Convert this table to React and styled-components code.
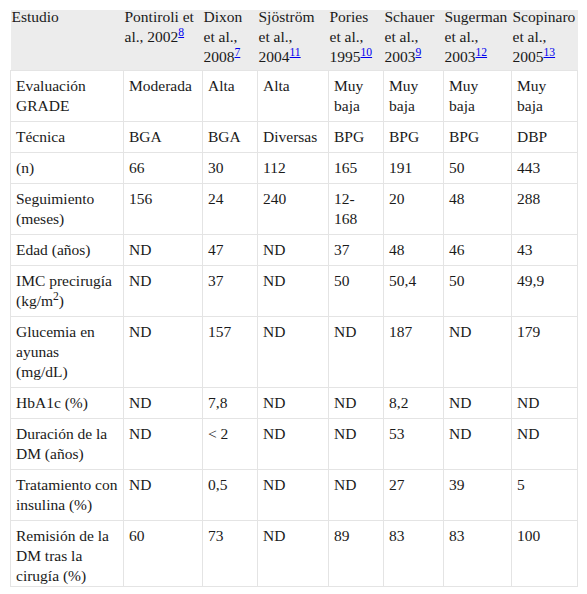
import React from "react";
import styled, { createGlobalStyle } from "styled-components";

const Global = createGlobalStyle`
  html, body { margin: 0; padding: 0; background: #ffffff; }
  body { font-family: "Liberation Serif", "Times New Roman", serif; color: #1a1a1a; }
`;

const Page = styled.div`
  padding: 10px;
`;

const Table = styled.table`
  width: 567px;
  table-layout: fixed;
  border-collapse: collapse;
  font-family: "Liberation Serif", "Times New Roman", serif;
  font-size: 15.5px;
  line-height: 20px;
  color: #1a1a1a;
`;

const HeadRow = styled.tr`
  background: #ececec;
`;

const Th = styled.th`
  text-align: left;
  vertical-align: top;
  font-weight: normal;
  padding: 0 1px 3px 1px;
  border: none;
`;

const HeadLabel = styled.div`
  margin-top: -3px;
`;

const Td = styled.td`
  text-align: left;
  vertical-align: top;
  padding: 5px 4.5px 5px 5px;
  border: 1px solid #e4e4e4;
  tr:last-child > & {
    padding-bottom: 0;
  }
`;

const Ref = styled.a`
  color: #0000ee;
  text-decoration: underline;
  font-size: 0.75em;
  vertical-align: super;
  line-height: 0;
`;

const Sup = styled.sup`
  font-size: 0.75em;
  line-height: 0;
`;

const widths = [113, 79, 55, 71, 55, 60, 68, 66];

const studies = [
  ["Pontiroli et al., 2002", "8"],
  ["Dixon et al., 2008", "7"],
  ["Sjöström et al., 2004", "11"],
  ["Pories et al., 1995", "10"],
  ["Schauer et al., 2003", "9"],
  ["Sugerman et al., 2003", "12"],
  ["Scopinaro et al., 2005", "13"],
];

const rows = [
  ["Evaluación GRADE", "Moderada", "Alta", "Alta", "Muy baja", "Muy baja", "Muy baja", "Muy baja"],
  ["Técnica", "BGA", "BGA", "Diversas", "BPG", "BPG", "BPG", "DBP"],
  ["(n)", "66", "30", "112", "165", "191", "50", "443"],
  ["Seguimiento (meses)", "156", "24", "240", <>12-<br />168</>, "20", "48", "288"],
  ["Edad (años)", "ND", "47", "ND", "37", "48", "46", "43"],
  [
    <>IMC precirugía (kg/m<Sup>2</Sup>)</>,
    "ND", "37", "ND", "50", "50,4", "50", "49,9",
  ],
  [<>Glucemia en ayunas<br />(mg/dL)</>, "ND", "157", "ND", "ND", "187", "ND", "179"],
  ["HbA1c (%)", "ND", "7,8", "ND", "ND", "8,2", "ND", "ND"],
  ["Duración de la DM (años)", "ND", "< 2", "ND", "ND", "53", "ND", "ND"],
  ["Tratamiento con insulina (%)", "ND", "0,5", "ND", "ND", "27", "39", "5"],
  ["Remisión de la DM tras la cirugía (%)", "60", "73", "ND", "89", "83", "83", "100"],
];

export default function App() {
  return (
    <Page>
      <Global />
      <Table>
        <colgroup>
          {widths.map((w, i) => (
            <col key={i} style={{ width: w }} />
          ))}
        </colgroup>
        <thead>
          <HeadRow>
            <Th>
              <HeadLabel>Estudio</HeadLabel>
            </Th>
            {studies.map(([name, ref]) => (
              <Th key={ref}>
                <HeadLabel>
                  {name}
                  <Ref href="#">{ref}</Ref>
                </HeadLabel>
              </Th>
            ))}
          </HeadRow>
        </thead>
        <tbody>
          {rows.map((r, i) => (
            <tr key={i}>
              {r.map((c, j) => (
                <Td key={j}>{c}</Td>
              ))}
            </tr>
          ))}
        </tbody>
      </Table>
    </Page>
  );
}
